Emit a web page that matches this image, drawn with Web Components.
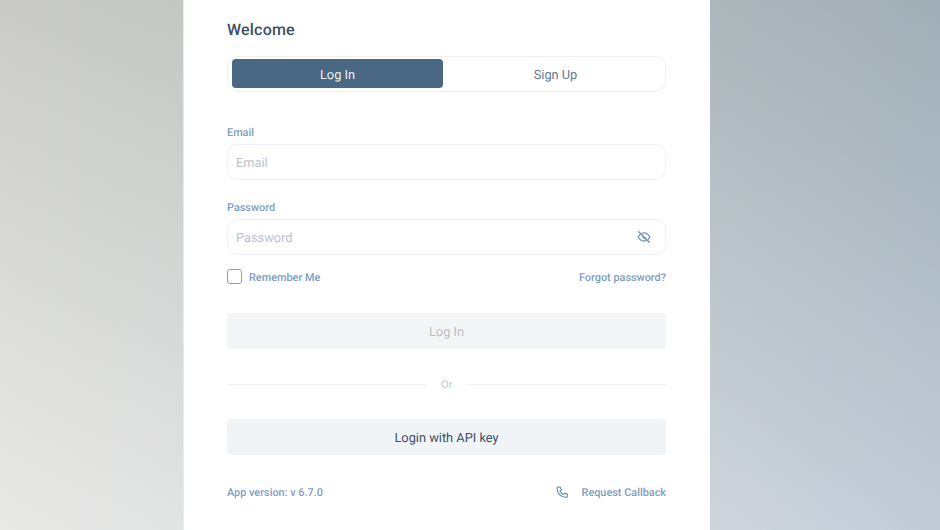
<!DOCTYPE html>
<html><head><meta charset="utf-8"><style>
html,body{margin:0;height:100%;overflow:hidden}
body{font-family:Roboto,sans-serif;text-rendering:geometricPrecision}
</style></head><body>
<template id="t-page"><style>
:host{display:flex;padding-left:183px;box-sizing:border-box;width:940px;height:530px;overflow:hidden;
background-image:linear-gradient(225deg,#f0f6f8 0%,#fff 50%),linear-gradient(to right,#fff,#d0dae8),linear-gradient(172deg,#cacbc6,#f1f1ef);
background-blend-mode:multiply}
.card{width:527px;height:530px;box-sizing:border-box;background:#fff;border-left:1px solid #e9eaea;padding:0 44px 0 43px;display:flex;flex-direction:column}
</style><div class="card"><slot></slot></div></template>

<template id="t-title"><style>
:host{display:block;padding-top:19px;height:37px;box-sizing:content-box;font:500 16px/21px Roboto,sans-serif;letter-spacing:.2px;color:#3d4f66}
</style><slot></slot></template>

<template id="t-tabs"><style>
:host{display:flex;height:36px;box-sizing:border-box;border:1px solid #f2f0ec;border-radius:10px;padding:2px 3px 3px 4px;font:400 12.8px/16px Roboto,sans-serif}
.a,.b{display:flex;align-items:center;justify-content:center;padding-top:4px;box-sizing:border-box}
.a{width:211px;background:#4a6783;color:#eef2f6;border-radius:4px}
.b{flex:1;color:#5f7a96;padding-left:6px}
</style><div class="a">Log In</div><div class="b">Sign Up</div></template>

<template id="t-field"><style>
:host{display:block;font-family:Roboto,sans-serif}
.l{font:500 10.88px/14px Roboto,sans-serif;color:#7d9dc2;height:14px;box-sizing:border-box;padding-top:1px;margin-bottom:5px}
.i{height:36px;box-sizing:border-box;border:1px solid #eef1f6;border-radius:10px;padding:0 14px 0 8px;display:flex;align-items:center;justify-content:space-between;font:400 12.8px/16px Roboto,sans-serif;color:#bcc2cc}
.p{padding-top:3px}
</style><div class="l"><slot name="label"></slot></div><div class="i"><span class="p"><slot name="ph"></slot></span><slot name="icon"></slot></div></template>

<template id="t-opts"><style>
:host{display:flex;justify-content:space-between;align-items:center;height:16px;font:500 10.88px/16px Roboto,sans-serif;color:#7d9dc2}
.l{display:flex;align-items:center;gap:7px}
.c{width:15px;height:15px;box-sizing:border-box;border:1.5px solid #86a2c3;border-radius:3px;margin-top:-1px}
.t{padding-top:1px}
</style><div class="l"><span class="c"></span><span class="t">Remember Me</span></div><span class="t">Forgot password?</span></template>

<template id="t-btn"><style>
:host{display:flex;align-items:center;justify-content:center;height:36px;box-sizing:border-box;padding-top:3px;border-radius:4px;font:400 12.8px/16px Roboto,sans-serif;background:#f4f5f7;color:#b9bec6}
:host([kind=alt]){background:#f1f4f7;color:#3d4f66;padding-top:4px}
</style><slot></slot></template>

<template id="t-or"><style>
:host{display:flex;align-items:center;gap:14px;height:14px;font:400 10.88px/14px Roboto,sans-serif;color:#c2c7d0}
i{flex:1;height:1px;background:#eef1f6}
span{margin:1px 0 -1px}
</style><i></i><span>Or</span><i></i></template>

<template id="t-foot"><style>
:host{display:flex;justify-content:space-between;align-items:center;height:16px;font:500 10.88px/16px Roboto,sans-serif;color:#7d9dc2}
.r{display:flex;align-items:center;gap:13px}
.t{padding-top:2px}
svg{display:block}
</style><span class="t">App version: v 6.7.0</span><span class="r"><svg width="13" height="14" viewBox="0 0 24 24" fill="none" stroke="#7396bd" stroke-width="2.400" stroke-linecap="round" stroke-linejoin="round"><path d="M4 3h4l2 5-2.500 2a13 13 0 0 0 6.500 6.500l2-2.500 5 2v4a2 2 0 0 1-2 2A17 17 0 0 1 2 5a2 2 0 0 1 2-2"/></svg><span class="t">Request Callback</span></span></template>

<lg-page>
 <lg-title>Welcome</lg-title>
 <lg-tabs></lg-tabs>
 <lg-field style="margin-top:33px"><span slot="label">Email</span><span slot="ph">Email</span></lg-field>
 <lg-field style="margin-top:20px"><span slot="label">Password</span><span slot="ph">Password</span>
  <svg slot="icon" style="display:block" width="14" height="14" viewBox="0 0 24 24" fill="none" stroke="#7396bd" stroke-width="2.400" stroke-linecap="round" stroke-linejoin="round"><path d="M3 3l18 18"/><path d="M10.600 10.600a2 2 0 0 0 2.800 2.800"/><path d="M9.400 5.400A9 9 0 0 1 12 5c4 0 7.300 2.300 10 7-.8 1.400-1.700 2.600-2.600 3.600M16.400 16.400A9 9 0 0 1 12 19c-4 0-7.300-2.300-10-7 1.300-2.300 2.800-4 4.500-5.200"/></svg>
 </lg-field>
 <lg-opts style="margin-top:14px"></lg-opts>
 <lg-btn style="margin-top:28px">Log In</lg-btn>
 <lg-or style="margin-top:28px"></lg-or>
 <lg-btn kind="alt" style="margin-top:28px">Login with API key</lg-btn>
 <lg-foot style="margin-top:29px"></lg-foot>
</lg-page>
<script>
for(const [n,t] of [['lg-page','t-page'],['lg-title','t-title'],['lg-tabs','t-tabs'],['lg-field','t-field'],['lg-opts','t-opts'],['lg-btn','t-btn'],['lg-or','t-or'],['lg-foot','t-foot']]){
 customElements.define(n,class extends HTMLElement{constructor(){super();this.attachShadow({mode:'open'}).appendChild(document.getElementById(t).content.cloneNode(true))}});
}
</script>
</body></html>
